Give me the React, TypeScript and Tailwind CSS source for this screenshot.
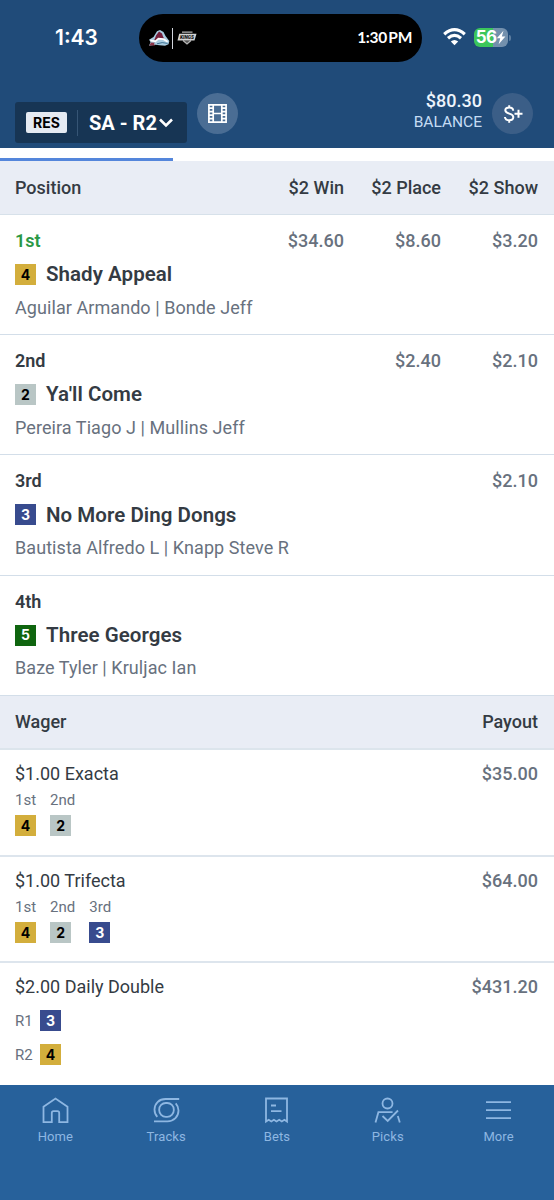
import type { ReactNode } from "react";

type Num = 2 | 3 | 4 | 5;

const saddle: Record<Num, string> = {
	2: "bg-[#b9c6c5] text-black",
	3: "bg-[#384b8e] text-white",
	4: "bg-[#d3ae3c] text-black",
	5: "bg-[#0f650f] text-white",
};

const runners: {
	place: string;
	num: Num;
	name: string;
	people: string;
	pays: string[];
}[] = [
	{ place: "1st", num: 4, name: "Shady Appeal", people: "Aguilar Armando | Bonde Jeff", pays: ["$34.60", "$8.60", "$3.20"] },
	{ place: "2nd", num: 2, name: "Ya'll Come", people: "Pereira Tiago J | Mullins Jeff", pays: ["", "$2.40", "$2.10"] },
	{ place: "3rd", num: 3, name: "No More Ding Dongs", people: "Bautista Alfredo L | Knapp Steve R", pays: ["", "", "$2.10"] },
	{ place: "4th", num: 5, name: "Three Georges", people: "Baze Tyler | Kruljac Ian", pays: ["", "", ""] },
];

const wagers: { title: string; payout: string; legs: [string, Num][] }[] = [
	{ title: "$1.00 Exacta", payout: "$35.00", legs: [["1st", 4], ["2nd", 2]] },
	{ title: "$1.00 Trifecta", payout: "$64.00", legs: [["1st", 4], ["2nd", 2], ["3rd", 3]] },
];

function Saddle({ num }: { num: Num }) {
	return (
		<span
			className={`flex h-[21px] w-[21px] shrink-0 items-center justify-center font-['Inter',sans-serif] text-[14px] leading-none font-bold ${saddle[num]}`}
		>
			{num}
		</span>
	);
}

function StatusBar() {
	return (
		<div className="flex h-[76px] items-start">
			<span className="w-[139px] pt-[26px] pl-[55px] font-['Inter',sans-serif] text-[21px] leading-6 font-semibold text-white">
				1:43
			</span>
			<div className="mt-[14px] flex h-12 w-[283px] items-center rounded-full bg-black pr-[10px] pl-[9px]">
				<svg width="22" height="18" viewBox="0 0 22 18">
					<path d="M1 16.8 2.6 13 1 10.8 5.5 8 9 2.2 12 1l3.5 2 2 4 3.8 5-.8 3.2-3.5 1.6-5.5-.6-4-.4z" fill="#a9cbdf" />
					<path d="M6.2 11.2 8.2 6.2 11 2.6l3 1.8 1 3.2 1.8 3.2-3.6-1-3 .2-1.5 1.6z" fill="#76203c" />
					<path d="m2.4 11.4 5 .9 3-2.6 5.2.5 4 2.6" fill="none" stroke="#fff" strokeWidth="1.7" />
					<path d="M9 14.8q5-2.2 10.6-.4" fill="none" stroke="#3d7396" strokeWidth="1" />
					<path d="m1.2 16.6 1.9-3.2 3.8.3-1 1.2 1.2 1.5z" fill="#8d3347" />
				</svg>
				<span className="ml-[2px] h-[21px] w-px bg-gray-300" />
				<svg className="ml-[2px]" width="24" height="18" viewBox="-2 -2 24 18">
					<path d="M5 1.2h10.5M6 9.5l4 3.4 4-3.4" fill="#555" stroke="#b5b5b5" strokeWidth="1.3" />
					<path d="M2.2 2.8h17.3l-2 6.7H.5z" fill="#d3d3d3" />
					<text x="3" y="8.4" fontSize="6" fontWeight="900" fontStyle="italic" fill="#111" fontFamily="Roboto, sans-serif" textLength="14" lengthAdjust="spacingAndGlyphs">
						KINGS
					</text>
				</svg>
				<span className="ml-auto font-['Lato',sans-serif] text-[15.5px] leading-none font-bold tracking-[-0.3px] [word-spacing:-2px] whitespace-nowrap text-white">
					1:30 PM
				</span>
			</div>
			<svg className="mt-7 ml-[21px]" width="23" height="18" viewBox="0 0 23 18" fill="none" stroke="#fff" strokeWidth="3.2">
				<path d="M1.2 6.2Q11.5-2.8 21.8 6.2M5 10.2q6.5-5.5 13 0" />
				<path d="m7.8 13.4 3.7 3.9 3.7-3.9q-3.7-3-7.4 0z" fill="#fff" stroke="none" />
			</svg>
			<div className="mt-7 ml-2 flex items-center">
				<div className="flex h-[19px] w-[34px] items-center justify-center rounded-md bg-[linear-gradient(90deg,#3cc65b_56%,#7390ad_56%)] text-white">
					<span className="font-['Inter',sans-serif] text-[17px] leading-none font-bold tracking-[-0.6px]">56</span>
					<svg width="10" height="15" viewBox="0 0 9 14" fill="currentColor">
						<path d="M6.8.8.6 7.8h3.2l-1.5 5.4L8.6 6H5.3z" />
					</svg>
				</div>
				<span className="ml-px h-[6px] w-[2px] rounded-r-full bg-[#5b7c9f]" />
			</div>
		</div>
	);
}

function Header() {
	return (
		<div className="flex h-[72px] px-[15px]">
			<div className="mt-[26px] flex h-[41px] w-[172px] items-center rounded-[3px] bg-[#173554]">
				<span className="ml-[11px] flex h-[21px] w-[41px] items-center justify-center rounded-[2px] bg-[#e5eaf2] font-['Inter',sans-serif] text-[14px] font-bold text-black">
					RES
				</span>
				<span className="ml-[10px] h-[26px] w-px bg-[#365575]" />
				<span className="ml-[11px] text-[20px] font-bold whitespace-nowrap text-white">SA - R2</span>
				<svg className="ml-[2px]" width="14" height="10" viewBox="0 0 14 10" fill="none" stroke="#fff" strokeWidth="2.6">
					<path d="m1 1.5 6 6 6-6" />
				</svg>
			</div>
			<div className="mt-[17px] ml-[10px] flex h-[41px] w-[41px] items-center justify-center rounded-full bg-[#4a6d94]">
				<svg width="19" height="19" viewBox="0 0 19 19" fill="none" stroke="#fff" strokeWidth="1.7">
					<path d="M.9.9h17.2v17.2H.9zM5.2 1v17M13.8 1v17M5 9.5h9" />
					<path d="M1 4.2h4M1 7.7h4M1 11.2h4M1 14.7h4M14 4.2h4M14 7.7h4M14 11.2h4M14 14.7h4" />
				</svg>
			</div>
			<div className="mt-[14px] ml-auto text-right leading-[21px]">
				<p className="text-[18px] font-medium text-[#edf4fc]">$80.30</p>
				<p className="text-[15.5px] leading-[22px] text-[#c5dcf4]">BALANCE</p>
			</div>
			<div className="mt-[17px] mr-[6px] ml-[10px] flex h-[41px] w-[41px] items-center justify-center rounded-full bg-[#3b5e87]">
				<svg width="20" height="20" viewBox="0 0 20 20" fill="none" stroke="#fff" strokeWidth="2">
					<path d="M10.2 6.7Q10 3.5 6.2 3.5 2.3 3.5 2.3 6.3c0 4.4 8 2.2 8 6.8 0 2-1.6 3.2-4 3.2q-4 0-4.4-3.3M6.2 1.2v2.5M6.2 16v2.7M11.5 9.7h8M15.5 5.7v8" />
				</svg>
			</div>
		</div>
	);
}

const tabs: { label: string; icon: ReactNode }[] = [
	{
		label: "Home",
		icon: <path d="M1.5 25.2V9.8L13.5 1.5l12 8.3v15.4h-8.3v-9.3q0-1.7-1.7-1.7h-4q-1.7 0-1.7 1.7v9.3z" />,
	},
	{
		label: "Tracks",
		icon: (
			<>
				<rect x="6.2" y="6" width="14.6" height="13.8" rx="6.6" />
				<path d="M26.2 2H12.5C6 2 1.5 6.6 1.5 12.6q0 4.4 2.8 7.2M1 24.3h13.5c6.5 0 11-4.8 11-10.8q0-4.2-2.8-7.2" />
			</>
		),
	},
	{
		label: "Bets",
		icon: <path d="M3 1.5h21v23l-2.6-1.7-2.6 1.7-2.6-1.7-2.7 1.7-2.6-1.7-2.6 1.7-2.6-1.7L3 24.5zM8 8.5h5M8 14.2h10.5" />,
	},
	{
		label: "Picks",
		icon: (
			<>
				<circle cx="13.5" cy="6.5" r="5" />
				<path d="M1.5 25.5 4.4 15.2h14.2M8.5 19l5.2 5L24 13.5M23.8 19l2 6.5" />
			</>
		),
	},
	{ label: "More", icon: <path d="M1 5.2h25M1 13.2h25M1 21.2h25" /> },
];

export default function App() {
	return (
		<div className="flex h-[1200px] w-[554px] flex-col overflow-hidden bg-white font-['Roboto',sans-serif] text-[#343b43]">
			<header className="bg-[#204b79]">
				<StatusBar />
				<Header />
			</header>
			<div className="flex h-[13px] shrink-0 items-end">
				<span className="h-[3px] w-[173px] bg-[#5486db]" />
			</div>

			<div className="flex h-[54px] shrink-0 items-center border-b border-[#d7e1ea] bg-[#e9edf5] pr-4 pl-[15px] text-[18px] font-medium">
				<span className="flex-1">Position</span>
				<span className="w-[97px] text-right">$2 Win</span>
				<span className="w-[97px] text-right">$2 Place</span>
				<span className="w-[97px] text-right">$2 Show</span>
			</div>

			{runners.map(({ place, num, name, people, pays }) => (
				<div key={place} className="h-[120.2px] shrink-0 border-b border-[#d3dee9] pt-[14px] pr-4 pl-[15px]">
					<div className="flex text-[18px] leading-6 font-medium">
						<span className={`flex-1 font-semibold ${place === "1st" ? "text-[#2b9845]" : ""}`}>{place}</span>
						{pays.map((pay, i) => (
							<span key={i} className="w-[97px] text-right text-[#68717e]">
								{pay}
							</span>
						))}
					</div>
					<div className="mt-[9.5px] flex h-6 items-center gap-[10px]">
						<Saddle num={num} />
						<span className="text-[20.5px] font-semibold tracking-[0.05px]">{name}</span>
					</div>
					<p className="mt-[9px] text-[18px] leading-6 tracking-[0.07px] text-[#68717e]">{people}</p>
				</div>
			))}

			<div className="flex h-[54px] shrink-0 items-center justify-between border-b-2 border-[#dce5ec] bg-[#e9edf5] pr-4 pl-[15px] text-[18px] font-medium">
				<span>Wager</span>
				<span>Payout</span>
			</div>

			{wagers.map(({ title, payout, legs }) => (
				<div key={title} className="h-[106.8px] shrink-0 border-b-2 border-[#dde5ed] pt-3 pr-4 pl-[15px]">
					<div className="flex justify-between text-[18px] leading-6">
						<span>{title}</span>
						<span className="font-medium text-[#68717e]">{payout}</span>
					</div>
					<div className="mt-1 flex gap-[14px] text-[15px] text-[#68717e]">
						{legs.map(([label, num]) => (
							<div key={label} className="flex flex-col gap-[5.5px] leading-5">
								<span>{label}</span>
								<Saddle num={num} />
							</div>
						))}
					</div>
				</div>
			))}

			<div className="h-[122px] shrink-0 pt-3 pr-4 pl-[15px]">
				<div className="flex justify-between text-[18px] leading-6">
					<span>$2.00 Daily Double</span>
					<span className="font-medium text-[#68717e]">$431.20</span>
				</div>
				<div className="mt-[11px] flex flex-col gap-[13px] text-[15px] text-[#68717e]">
					<div className="flex items-center">
						<span className="w-[25px] leading-5">R1</span>
						<Saddle num={3} />
					</div>
					<div className="flex items-center">
						<span className="w-[25px] leading-5">R2</span>
						<Saddle num={4} />
					</div>
				</div>
			</div>

			<nav className="flex flex-1 items-start bg-[#27619b] pt-[12px] text-[#8eb7e2]">
				{tabs.map(({ label, icon }) => (
					<div key={label} className="flex flex-1 flex-col items-center">
						<svg width="27" height="27" viewBox="0 0 27 27" fill="none" stroke="currentColor" strokeWidth="1.8">
							{icon}
						</svg>
						<span className="mt-[5px] text-[13px] leading-4 tracking-[0.1px]">{label}</span>
					</div>
				))}
			</nav>
		</div>
	);
}
